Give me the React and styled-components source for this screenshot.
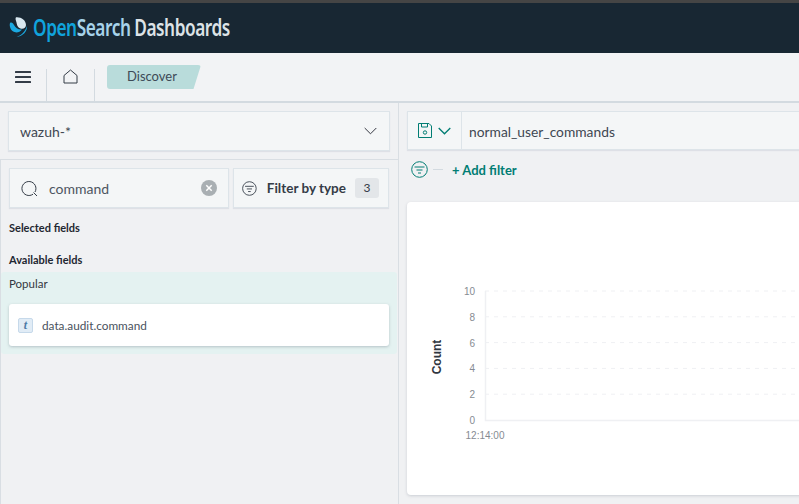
import React from 'react';
import styled, { createGlobalStyle } from 'styled-components';

const Global = createGlobalStyle`
  html, body { margin: 0; padding: 0; height: 100%; overflow: hidden; }
  body { background: #f0f1f3; font-family: 'Lato', 'Noto Sans', 'Liberation Sans', sans-serif; color: #343741; }
  #root { height: 100%; }
  * { box-sizing: border-box; }
`;

const Page = styled.div`
  width: 799px;
  height: 504px;
  overflow: hidden;
  display: flex;
  flex-direction: column;
`;

const TopStrip = styled.div`
  height: 3px;
  background: #454545;
`;

const Header = styled.header`
  height: 50px;
  background: #182733;
  display: flex;
  align-items: center;
  gap: 5px;
  padding: 0 0 2px 9px;
`;

const Brand = styled.div`
  font-family: 'Noto Sans', sans-serif;
  font-size: 23px;
  font-weight: 600;
  letter-spacing: -0.6px;
  white-space: nowrap;
  line-height: 24px;
  display: flex;
  transform: scaleX(0.75);
  transform-origin: left center;
`;

const BrandPart = styled.span`
  color: ${(p) => p.$color};
  margin-right: ${(p) => p.$gap || 0}px;
`;

const Breadcrumbs = styled.nav`
  height: 50px;
  background: #f2f3f5;
  border-bottom: 2px solid #d3dae0;
  display: flex;
  align-items: flex-start;
`;

const NavCell = styled.div`
  width: ${(p) => p.$width}px;
  height: 32px;
  margin-top: 16px;
  display: flex;
  justify-content: center;
  border-right: 1px solid #d3dae0;
  svg { margin-top: ${(p) => p.$iconTop}px; }
`;

const Crumb = styled.div`
  width: 94px;
  height: 24px;
  margin: 12px 0 0 12px;
  background: #b9dcdb;
  border-radius: 3px;
  clip-path: polygon(0 0, 100% 0, 92% 100%, 0 100%);
  font-size: 13px;
  line-height: 22px;
  padding-left: 20px;
  color: #3d4a57;
`;

const Main = styled.main`
  flex: 1;
  display: flex;
  min-height: 0;
`;

const Sidebar = styled.aside`
  width: 399px;
  flex: none;
  display: flex;
  flex-direction: column;
  border-right: 1px solid #d9dee3;
`;

const SelectWrap = styled.div`
  padding: 8px 8px 8px 8px;
`;

const Field = styled.div`
  background: #f4f6f7;
  border: 1px solid #dde4e9;
  box-shadow: 0 1px 1px rgba(152, 162, 179, 0.2);
  display: flex;
  align-items: center;
`;

const IndexSelect = styled(Field)`
  height: 40px;
  padding: 0 12px 0 11px;
  justify-content: space-between;
  font-size: 14px;
  color: #3f4752;
`;

const FieldPanel = styled.section`
  flex: 1;
  border-top: 1px solid #d9dee3;
  border-left: 1px solid #d9dee3;
`;

const SearchRow = styled.div`
  display: flex;
  gap: 4px;
  padding: 8px 9px 0 8px;
`;

const SearchBox = styled(Field)`
  width: 220px;
  flex: none;
  height: 40px;
  padding: 0 11px 0 11px;
  font-size: 14px;
  color: #4d5561;
  gap: 11px;
`;

const SearchText = styled.span`
  flex: 1;
`;

const FilterButton = styled(Field)`
  flex: 1;
  min-width: 0;
  height: 40px;
  padding: 0 9px 0 8px;
  font-size: 13.5px;
  font-weight: 700;
  color: #343c47;
`;

const FilterLabel = styled.span`
  margin: 0 9px 0 9px;
  padding-left: 1px;
  flex: 1;
  white-space: nowrap;
`;

const Count = styled.span`
  width: 24px;
  height: 20px;
  flex: none;
  border-radius: 3px;
  background: #e3e6e9;
  font-size: 12px;
  font-weight: 400;
  line-height: 20px;
  text-align: center;
`;

const SectionTitle = styled.h3`
  margin: ${(p) => p.$top}px 0 0 8px;
  font-size: 11px;
  line-height: 14px;
  font-weight: 700;
  color: #1f2731;
`;

const Popular = styled.div`
  margin-top: 5px;
  width: 396px;
  height: 82px;
  background: #e4f2f1;
  border-radius: 3px;
  padding: 4px 8px 0;
`;

const PopularLabel = styled.div`
  font-size: 11.5px;
  line-height: 15px;
  color: #343741;
`;

const FieldCard = styled.div`
  margin-top: 13px;
  height: 42px;
  background: #fff;
  border-radius: 3px;
  box-shadow: 0 1px 3px rgba(90, 105, 120, 0.35);
  display: flex;
  align-items: center;
  padding: 0 9px;
  gap: 9px;
  font-size: 11.8px;
  color: #4a525e;
`;

const TypeToken = styled.span`
  width: 15px;
  height: 15px;
  border-radius: 2px;
  background: #e1ecf6;
  border: 1px solid #c6d9ea;
  color: #4d7ba6;
  font-family: 'Liberation Serif', serif;
  font-style: italic;
  font-weight: 700;
  font-size: 12px;
  line-height: 13px;
  text-align: center;
`;

const Content = styled.section`
  flex: 1;
  min-width: 0;
  padding: 8px 0 9px 8px;
  display: flex;
  flex-direction: column;
`;

const QueryBar = styled(Field)`
  height: 39px;
  width: 400px;
  border-right: none;
`;

const SaveButton = styled.div`
  width: 54px;
  height: 100%;
  flex: none;
  display: flex;
  align-items: center;
  justify-content: center;
  gap: 6px;
  border-right: 1px solid #dde4e9;
`;

const QueryText = styled.span`
  margin-left: 7px;
  padding-top: 1px;
  font-size: 13.8px;
  color: #3f4752;
`;

const FilterRow = styled.div`
  height: 40px;
  padding: 0 0 1px 4px;
  display: flex;
  align-items: center;
`;

const Dash = styled.span`
  width: 10px;
  height: 1px;
  background: #d3dae0;
  margin: 0 9px 0 5px;
`;

const AddFilter = styled.span`
  font-size: 13px;
  font-weight: 700;
  color: #017d73;
`;

const ChartCard = styled.div`
  width: 410px;
  flex: 1;
  margin-top: 12px;
  background: #fff;
  border-radius: 4px 0 0 4px;
  box-shadow: 0 1px 3px rgba(90, 105, 120, 0.25);
  overflow: hidden;
`;

const Logo = () => (
  <svg width="19" height="21" viewBox="0 0 19 21">
    <path d="M7 .2C12-.3 17 3 17 8c0 3-3 4.500-5.500 3.500C8.500 10.500 8 8 7.500 5.500 7 3.500 6 2 7 .2z" fill="#d9e8f0" />
    <path d="M1 6c1.500-1 3 0 4 2 1.500 3 4.500 5 8 4.500-2 2.500-5 3.500-7.500 2.500C2 14 0 9.500 1 6z" fill="#1ba9e1" />
    <path d="M18 9c.5 5-4 10.500-10.500 11C12 18.500 16 15 18 9z" fill="#1ba9e1" />
  </svg>
);

const Menu = () => (
  <svg width="16" height="12" viewBox="0 0 16 12" fill="#343c47">
    <rect y="0" width="16" height="2" rx="0.5" />
    <rect y="5" width="16" height="2" rx="0.5" />
    <rect y="10" width="16" height="2" rx="0.5" />
  </svg>
);

const Home = () => (
  <svg width="15" height="15" viewBox="0 0 15 15" fill="none" stroke="#343c47" strokeWidth="1">
    <path d="M1 6.500 7.500 1 14 6.500V14H1z" />
  </svg>
);

const Chevron = ({ color = '#343741', weight = 1 }) => (
  <svg width="13" height="8" viewBox="0 0 13 8" fill="none" stroke={color} strokeWidth={weight}>
    <path d="M.7 1 6.500 6.800 12.300 1" />
  </svg>
);

const Search = () => (
  <svg width="17" height="17" viewBox="0 0 17 17" fill="none" stroke="#343c47" strokeWidth="1">
    <path d="M12 14.200A7 7 0 1 1 14 12" />
    <path d="M12.500 12.500 16 16" />
  </svg>
);

const Clear = () => (
  <svg width="16" height="16" viewBox="0 0 16 16">
    <circle cx="8" cy="8" r="8" fill="#a9afb3" />
    <path d="M5.300 5.300l5.400 5.400M10.700 5.300l-5.400 5.400" stroke="#fff" strokeWidth="1.500" />
  </svg>
);

const FilterIcon = ({ color = '#343c47' }) => (
  <svg width="17" height="17" viewBox="0 0 17 17" fill="none" stroke={color} strokeWidth="1">
    <circle cx="8.500" cy="8.500" r="7.800" />
    <path d="M3.500 6h10M5.500 9h6M7 12h3" />
  </svg>
);

const Save = () => (
  <svg width="14" height="15" viewBox="0 0 14 15" fill="none" stroke="#017d73" strokeWidth="1">
    <path d="M.5.500h10.500L13.500 3v11.500H.5z" />
    <path d="M3.500.500v3.500h6V.500" />
    <circle cx="7" cy="9.500" r="1.700" />
  </svg>
);

const yTicks = [0, 2, 4, 6, 8, 10];

const Histogram = () => (
  <svg width="410" height="293" viewBox="0 0 410 293">
    {yTicks.slice(1).map((t) => (
      <line key={t} x1="78" x2="410" y1={218 - t * 12.9} y2={218 - t * 12.9} stroke="#eff0f3" strokeDasharray="4 5" />
    ))}
    <path d="M78.500 89V218.500H410" fill="none" stroke="#eff0f3" strokeWidth="1.500" />
    {yTicks.map((t) => (
      <text key={t} x="68" y={222 - t * 12.9} textAnchor="end" fontFamily="Liberation Sans" fontSize="10" fill="#868b92">{t}</text>
    ))}
    <text x="78" y="237" textAnchor="middle" fontFamily="Liberation Sans" fontSize="10" fill="#868b92">12:14:00</text>
    <text transform="translate(34 155) rotate(-90)" textAnchor="middle" fontFamily="Liberation Sans" fontSize="12" fontWeight="700" fill="#2f3640">Count</text>
  </svg>
);

export default function App() {
  return (
    <Page>
      <Global />
      <TopStrip />
      <Header>
        <Logo />
        <Brand>
          <BrandPart $color="#10a3dc">Open</BrandPart>
          <BrandPart $color="#a7d3ea" $gap={5}>Search</BrandPart>
          <BrandPart $color="#dde3e7">Dashboards</BrandPart>
        </Brand>
      </Header>
      <Breadcrumbs>
        <NavCell $width={47} $iconTop={2}><Menu /></NavCell>
        <NavCell $width={48} $iconTop={0}><Home /></NavCell>
        <Crumb>Discover</Crumb>
      </Breadcrumbs>
      <Main>
        <Sidebar>
          <SelectWrap>
            <IndexSelect>wazuh-*<Chevron /></IndexSelect>
          </SelectWrap>
          <FieldPanel>
            <SearchRow>
              <SearchBox>
                <Search />
                <SearchText>command</SearchText>
                <Clear />
              </SearchBox>
              <FilterButton>
                <FilterIcon />
                <FilterLabel>Filter by type</FilterLabel>
                <Count>3</Count>
              </FilterButton>
            </SearchRow>
            <SectionTitle $top={13}>Selected fields</SectionTitle>
            <SectionTitle $top={18}>Available fields</SectionTitle>
            <Popular>
              <PopularLabel>Popular</PopularLabel>
              <FieldCard>
                <TypeToken>t</TypeToken>
                data.audit.command
              </FieldCard>
            </Popular>
          </FieldPanel>
        </Sidebar>
        <Content>
          <QueryBar>
            <SaveButton><Save /><Chevron color="#017d73" weight={1.3} /></SaveButton>
            <QueryText>normal_user_commands</QueryText>
          </QueryBar>
          <FilterRow>
            <FilterIcon color="#017d73" />
            <Dash />
            <AddFilter>+ Add filter</AddFilter>
          </FilterRow>
          <ChartCard><Histogram /></ChartCard>
        </Content>
      </Main>
    </Page>
  );
}
